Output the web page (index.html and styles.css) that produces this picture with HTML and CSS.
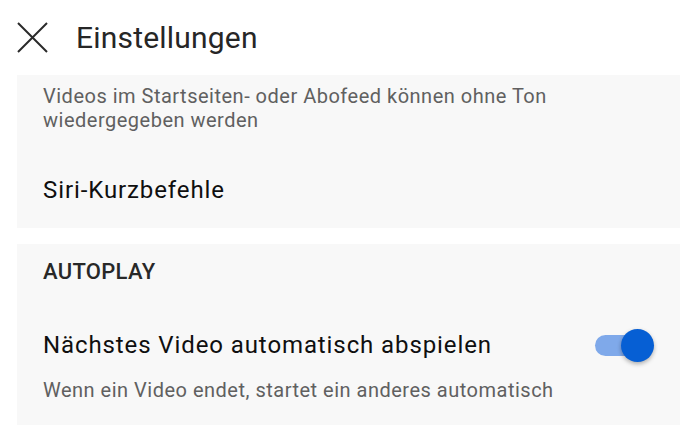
FILE: index.html
```html
<!DOCTYPE html>
<html lang="de">
<head>
<meta charset="utf-8">
<title>Einstellungen</title>
<link rel="stylesheet" href="styles.css">
</head>
<body>
<header class="topbar">
  <span class="close-icon">
    <svg width="31" height="31" viewBox="0 0 31 31"><path d="M1 1 L30 30 M30 1 L1 30" stroke="#2a2a2a" stroke-width="2" fill="none"/></svg>
  </span>
  <h1 class="title">Einstellungen</h1>
</header>
<main class="content">
  <section class="card card-first">
    <p class="desc">Videos im Startseiten- oder Abofeed können ohne Ton wiedergegeben werden</p>
    <div class="item item-siri">Siri-Kurzbefehle</div>
  </section>
  <section class="card card-autoplay">
    <div class="section-title">AUTOPLAY</div>
    <div class="row">
      <div class="item">Nächstes Video automatisch abspielen</div>
      <div class="toggle"><span class="track"></span><span class="thumb"></span></div>
    </div>
    <p class="desc desc-sub">Wenn ein Video endet, startet ein anderes automatisch</p>
  </section>
</main>
</body>
</html>
```
FILE: styles.css
```css
* { box-sizing: border-box; }
html, body { margin: 0; padding: 0; }
body {
  width: 696px;
  height: 433px;
  overflow: hidden;
  background: #ffffff;
  font-family: Roboto, "Liberation Sans", sans-serif;
  color: #0f0f0f;
}
.topbar {
  height: 75px;
  display: flex;
  align-items: center;
  padding-left: 17px;
}
.close-icon {
  width: 31px;
  height: 31px;
  display: flex;
}
.title {
  margin: 0 0 0 28px;
  font-size: 30px;
  font-weight: 400;
  color: #262626;
  line-height: 36px;
  letter-spacing: 0.2px;
}
.content {
  display: flex;
  flex-direction: column;
  gap: 16px;
  padding: 0 16px 0 17px;
}
.card {
  background: #f8f8f8;
  padding-left: 26px;
  padding-right: 26px;
}
.card-first {
  height: 153px;
  padding-top: 9px;
}
.desc {
  margin: 0;
  font-size: 20px;
  line-height: 24px;
  letter-spacing: 0.5px;
  color: #606060;
}
.card-first .desc {
  padding-right: 90px;
}
.item {
  font-size: 24px;
  line-height: 28px;
  letter-spacing: 0.9px;
  color: #0f0f0f;
}
.item-siri {
  margin-top: 44px;
}
.card-autoplay {
  height: 181px;
  padding-top: 16px;
}
.section-title {
  font-size: 22px;
  line-height: 24px;
  font-weight: 500;
  letter-spacing: 0.3px;
  color: #282828;
}
.row {
  margin-top: 47px;
  display: flex;
  align-items: center;
  justify-content: space-between;
  height: 28px;
}
.toggle {
  position: relative;
  width: 59px;
  height: 33px;
}
.track {
  position: absolute;
  left: 0;
  top: 6px;
  width: 52px;
  height: 21px;
  border-radius: 11px;
  background: #7fa9ea;
}
.thumb {
  position: absolute;
  right: 0;
  top: 0;
  width: 33px;
  height: 33px;
  border-radius: 50%;
  background: #065fd4;
  box-shadow: 0 2px 4px rgba(0,0,0,0.3);
}
.desc-sub {
  margin-top: 19px;
}
```
